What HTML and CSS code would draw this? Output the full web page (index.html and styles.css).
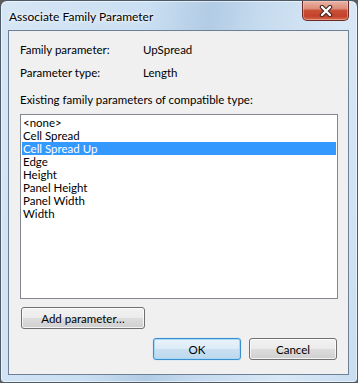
FILE: index.html
```html
<!DOCTYPE html>
<html lang="en">
<head>
  <meta charset="UTF-8">
  <title>Associate Family Parameter</title>
  <link rel="stylesheet" href="styles.css">
</head>
<body>

  <!-- Окно диалога -->
  <div class="window">
    <!-- Заголовок -->
    <div class="titlebar">
      <span class="title">Associate Family Parameter</span>
      <button class="close-btn" title="Close">
        <svg width="14" height="12" viewBox="0 0 14 12">
          <path d="M3 2 L11 10 M11 2 L3 10" stroke="#3d2420" stroke-width="4.4" stroke-linecap="round"/>
          <path d="M3 2 L11 10 M11 2 L3 10" stroke="#ffffff" stroke-width="2.4" stroke-linecap="round"/>
        </svg>
      </button>
    </div>

    <!-- Клиентская область -->
    <div class="client">
      <div class="info">
        <span>Family parameter:</span>
        <span>UpSpread</span>
        <span>Parameter type:</span>
        <span>Length</span>
      </div>

      <div class="list-label">Existing family parameters of compatible type:</div>

      <ul class="param-list">
        <li>&lt;none&gt;</li>
        <li>Cell Spread</li>
        <li class="selected">Cell Spread Up</li>
        <li>Edge</li>
        <li>Height</li>
        <li>Panel Height</li>
        <li>Panel Width</li>
        <li>Width</li>
      </ul>

      <div class="add-row">
        <button class="btn btn-add">Add parameter…</button>
      </div>

      <div class="actions">
        <button class="btn btn-default">OK</button>
        <button class="btn">Cancel</button>
      </div>
    </div>
  </div>

</body>
</html>
```

FILE: styles.css
```css
/* Обнуление отступов */
* {
  margin: 0;
  padding: 0;
  box-sizing: border-box;
}

body {
  font-family: Lato, "Noto Sans", sans-serif;
  font-size: 11.5px;
  color: #000;
  background-color: #5c5c5c;
}

/* Окно */
.window {
  width: 358px;
  height: 383px;
  border: 1px solid #4d5a68;
  border-radius: 7px 7px 4px 4px;
  background: linear-gradient(100deg, #d6e6f5 0%, #cadff2 35%, #b2cce5 50%, #c6dbef 62%, #d9e8f6 82%, #c9ddf1 100%);
  box-shadow: inset 0 0 0 1px rgba(255, 255, 255, 0.55);
  padding: 0 8px 7px 7px;
  display: flex;
  flex-direction: column;
}

/* Заголовок */
.titlebar {
  height: 29px;
  display: flex;
  justify-content: space-between;
  align-items: flex-start;
}

.title {
  font-size: 12px;
  padding: 8px 0 0 1px;
  line-height: 15px;
  text-shadow: 0 0 6px #fff, 0 0 3px #fff;
}

.close-btn {
  width: 47px;
  height: 20px;
  border: 1px solid #6b2b24;
  border-top: none;
  border-radius: 0 0 5px 5px;
  background: linear-gradient(#eab4a8 0%, #dc8c79 40%, #cb4f37 50%, #c4412c 80%, #d6694c 100%);
  box-shadow: inset 0 0 0 1px rgba(255, 210, 200, 0.45);
  display: flex;
  align-items: center;
  justify-content: center;
}

/* Клиентская область */
.client {
  height: 345px;
  border: 1px solid #6e8096;
  background-color: #f0f0f0;
  padding: 11px 10px 0 11px;
  display: flex;
  flex-direction: column;
}

.info {
  display: grid;
  grid-template-columns: 123px auto;
  row-gap: 8px;
  line-height: 15px;
}

.list-label {
  margin-top: 12px;
  line-height: 15px;
}

/* Список параметров */
.param-list {
  list-style: none;
  margin-top: 7px;
  height: 185px;
  border: 1px solid #828790;
  background-color: #fff;
  padding: 1px 1px 0 1px;
}

.param-list li {
  height: 13px;
  line-height: 13px;
  padding-left: 1px;
  white-space: nowrap;
}

.param-list li.selected {
  background-color: #3399ff;
  color: #fff;
}

/* Кнопки */
.btn {
  font-family: inherit;
  font-size: 11.5px;
  color: #000;
  height: 22px;
  border: 1px solid #707070;
  border-radius: 3px;
  background: linear-gradient(#f2f2f2 0%, #ebebeb 50%, #dddddd 50%, #cfcfcf 100%);
  box-shadow: inset 0 0 0 1px rgba(255, 255, 255, 0.75);
}

.add-row {
  margin-top: 8px;
  padding-left: 1px;
}

.btn-add {
  width: 124px;
}

.actions {
  margin-top: 9px;
  display: flex;
  justify-content: flex-end;
  gap: 8px;
  padding-right: 1px;
}

.actions .btn {
  width: 88px;
}

.btn-default {
  border-color: #3c8fcf;
  background: linear-gradient(#e9f3fb 0%, #dcebf7 50%, #cbe0f1 50%, #bcd7ec 100%);
  box-shadow: inset 0 0 0 1px #a6d9f7, 0 0 1px #5fb2e8;
}
```
